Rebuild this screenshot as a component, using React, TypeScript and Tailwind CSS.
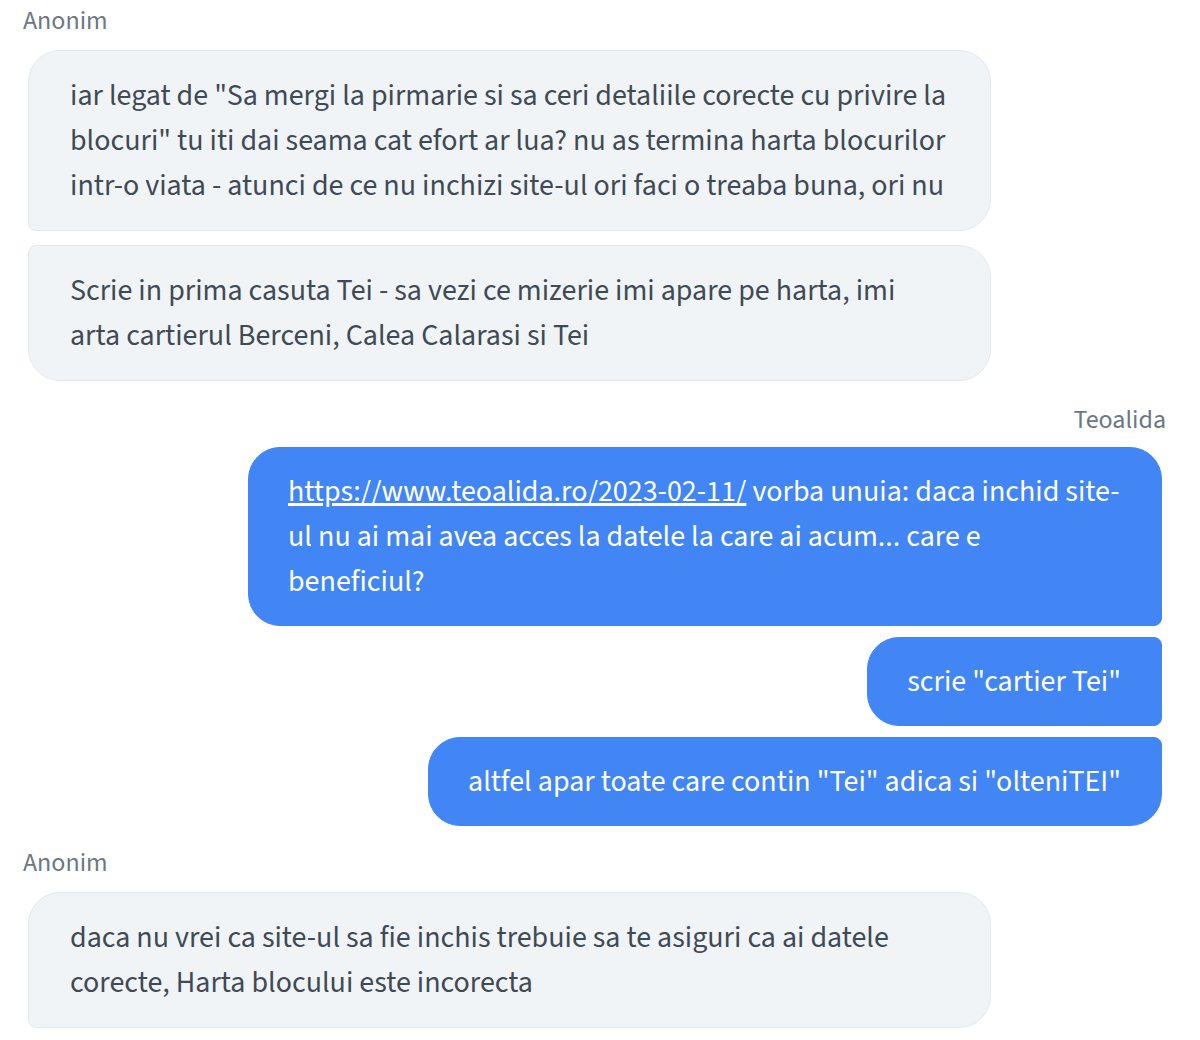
import type { ReactNode } from "react";

type Side = "left" | "right";

type Message = {
  id: number;
  body: ReactNode;
};

type Group = {
  author: string;
  side: Side;
  messages: Message[];
};

const groups: Group[] = [
  {
    author: "Anonim",
    side: "left",
    messages: [
      {
        id: 1,
        body: 'iar legat de "Sa mergi la pirmarie si sa ceri detaliile corecte cu privire la blocuri" tu iti dai seama cat efort ar lua? nu as termina harta blocurilor intr-o viata - atunci de ce nu inchizi site-ul ori faci o treaba buna, ori nu',
      },
      {
        id: 2,
        body: "Scrie in prima casuta Tei - sa vezi ce mizerie imi apare pe harta, imi arta cartierul Berceni, Calea Calarasi si Tei",
      },
    ],
  },
  {
    author: "Teoalida",
    side: "right",
    messages: [
      {
        id: 3,
        body: (
          <>
            <a href="#" className="underline">
              https://www.teoalida.ro/2023-02-11/
            </a>{" "}
            vorba unuia: daca inchid site-ul nu ai mai avea acces la datele la
            care ai acum... care e beneficiul?
          </>
        ),
      },
      { id: 4, body: 'scrie "cartier Tei"' },
      {
        id: 5,
        body: 'altfel apar toate care contin "Tei" adica si "olteniTEI"',
      },
    ],
  },
  {
    author: "Anonim",
    side: "left",
    messages: [
      {
        id: 6,
        body: "daca nu vrei ca site-ul sa fie inchis trebuie sa te asiguri ca ai datele corecte, Harta blocului este incorecta",
      },
    ],
  },
];

// corner shapes depend on where the bubble sits in its group
function leftCorners(index: number) {
  if (index === 0) {
    return "rounded-tl-[32px] rounded-tr-[32px] rounded-br-[32px] rounded-bl-[8px]";
  }

  return "rounded-tl-[8px] rounded-tr-[32px] rounded-br-[32px] rounded-bl-[32px]";
}

function rightCorners(index: number, count: number) {
  if (index === 0) {
    return "rounded-tl-[32px] rounded-tr-[32px] rounded-br-[8px] rounded-bl-[32px]";
  }

  if (index === count - 1) {
    return "rounded-tl-[32px] rounded-tr-[8px] rounded-br-[32px] rounded-bl-[32px]";
  }

  return "rounded-tl-[32px] rounded-tr-[8px] rounded-br-[8px] rounded-bl-[32px]";
}

export default function App() {
  return (
    <div className="min-h-[1040px] bg-white pt-[5px] pr-[34px] pl-[23px] font-['Source_Sans_3','Source_Sans_Pro','Lato',sans-serif] text-[30px] leading-[45px]">
      <div className="flex flex-col gap-[21px]">
        {groups.map((group, g) => (
          <ChatGroup key={g} group={group} />
        ))}
      </div>
    </div>
  );
}

function ChatGroup({ group }: { group: Group }) {
  const isLeft = group.side === "left";

  return (
    <div
      className={
        isLeft
          ? "flex flex-col items-start gap-[13px]"
          : "flex flex-col items-end gap-[11px] pt-[2px]"
      }
    >
      <div className="text-[26px] leading-[32px] text-[#6b7884]">
        {group.author}
      </div>

      <div
        className={
          isLeft
            ? "flex flex-col items-start gap-[14px]"
            : "flex flex-col items-end gap-[11px]"
        }
      >
        {group.messages.map((message, i) =>
          isLeft ? (
            <div
              key={message.id}
              className={`ml-[5px] w-[963px] border border-[#e3e9ed] bg-[#f0f4f7] px-[41px] py-[22px] text-[#3f4a55] ${leftCorners(i)}`}
            >
              {message.body}
            </div>
          ) : (
            <div
              key={message.id}
              className={`mr-[4px] max-w-[914px] border border-[#4285f4] bg-[#4285f4] py-[21px] pr-[40px] pl-[39px] text-white ${rightCorners(i, group.messages.length)}`}
            >
              {message.body}
            </div>
          ),
        )}
      </div>
    </div>
  );
}
